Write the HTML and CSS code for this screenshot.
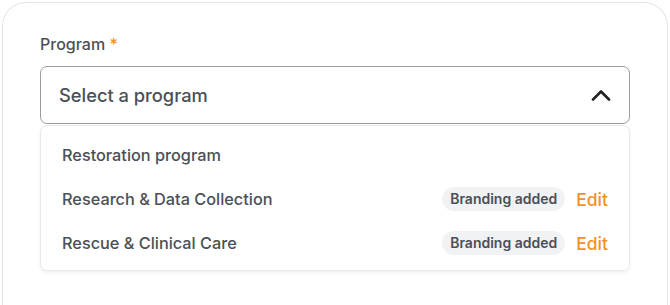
FILE: index.html
```html
<!DOCTYPE html>
<html lang="en">
<head>
<meta charset="utf-8">
<title>Program select</title>
<link rel="stylesheet" href="styles.css">
</head>
<body>
<div class="card">
  <div class="field">
    <label class="label">Program <span class="req">*</span></label>
    <div class="select">
      <span class="placeholder">Select a program</span>
      <svg class="chev" width="20" height="12" viewBox="0 0 20 12"><path d="M2 10.5 L10 2.5 L18 10.5" fill="none" stroke="#1f2328" stroke-width="2.6" stroke-linecap="round" stroke-linejoin="round"/></svg>
    </div>
    <ul class="menu">
      <li class="item"><span class="name">Restoration program</span></li>
      <li class="item"><span class="name">Research &amp; Data Collection</span><span class="badge">Branding added</span><a class="edit">Edit</a></li>
      <li class="item"><span class="name">Rescue &amp; Clinical Care</span><span class="badge">Branding added</span><a class="edit">Edit</a></li>
    </ul>
  </div>
</div>
</body>
</html>
```

FILE: styles.css
```css
* { box-sizing: border-box; }
html, body { margin: 0; padding: 0; background: #ffffff; }
body {
  font-family: "Inter", "Noto Sans", sans-serif;
  color: #4b5058;
  padding: 2px 2px 0 2px;
  height: 305px;
  overflow: hidden;
}
.card {
  border: 1px solid #e4e5e8;
  border-bottom: none;
  border-radius: 24px 24px 0 0;
  height: 303px;
  padding: 31px 37px 0 37px;
}
.field { display: flex; flex-direction: column; }
.label {
  font-size: 16px;
  font-weight: 500;
  line-height: 20px;
  color: #4b5058;
  margin-bottom: 12px;
}
.req { color: #f5901e; }
.select {
  height: 58px;
  border: 1px solid #9a9ca2;
  border-radius: 7px;
  display: flex;
  align-items: center;
  justify-content: space-between;
  padding: 0 18px 0 18px;
}
.placeholder { font-size: 18.3px; font-weight: 500; color: #4b5058; }
.chev { display: block; }
.menu {
  list-style: none;
  margin: 1px 0 0 0;
  padding: 7px 0 5px 0;
  border: 1px solid #e8e9ec;
  border-radius: 7px;
  box-shadow: 0 2px 4px rgba(0,0,0,0.06);
  display: flex;
  flex-direction: column;
}
.item {
  height: 44px;
  display: flex;
  align-items: center;
  padding: 0 21px 0 21px;
  font-size: 16.3px;
  font-weight: 500;
}
.name { flex: 1; color: #4b5058; }
.badge {
  background: #f1f2f4;
  border-radius: 12px;
  height: 24px;
  line-height: 24px;
  padding: 0 8px;
  font-size: 14px;
  font-weight: 600;
  color: #4b5058;
}
.edit {
  color: #f5901e;
  font-size: 17.5px;
  font-weight: 500;
  margin-left: 11px;
}
```
